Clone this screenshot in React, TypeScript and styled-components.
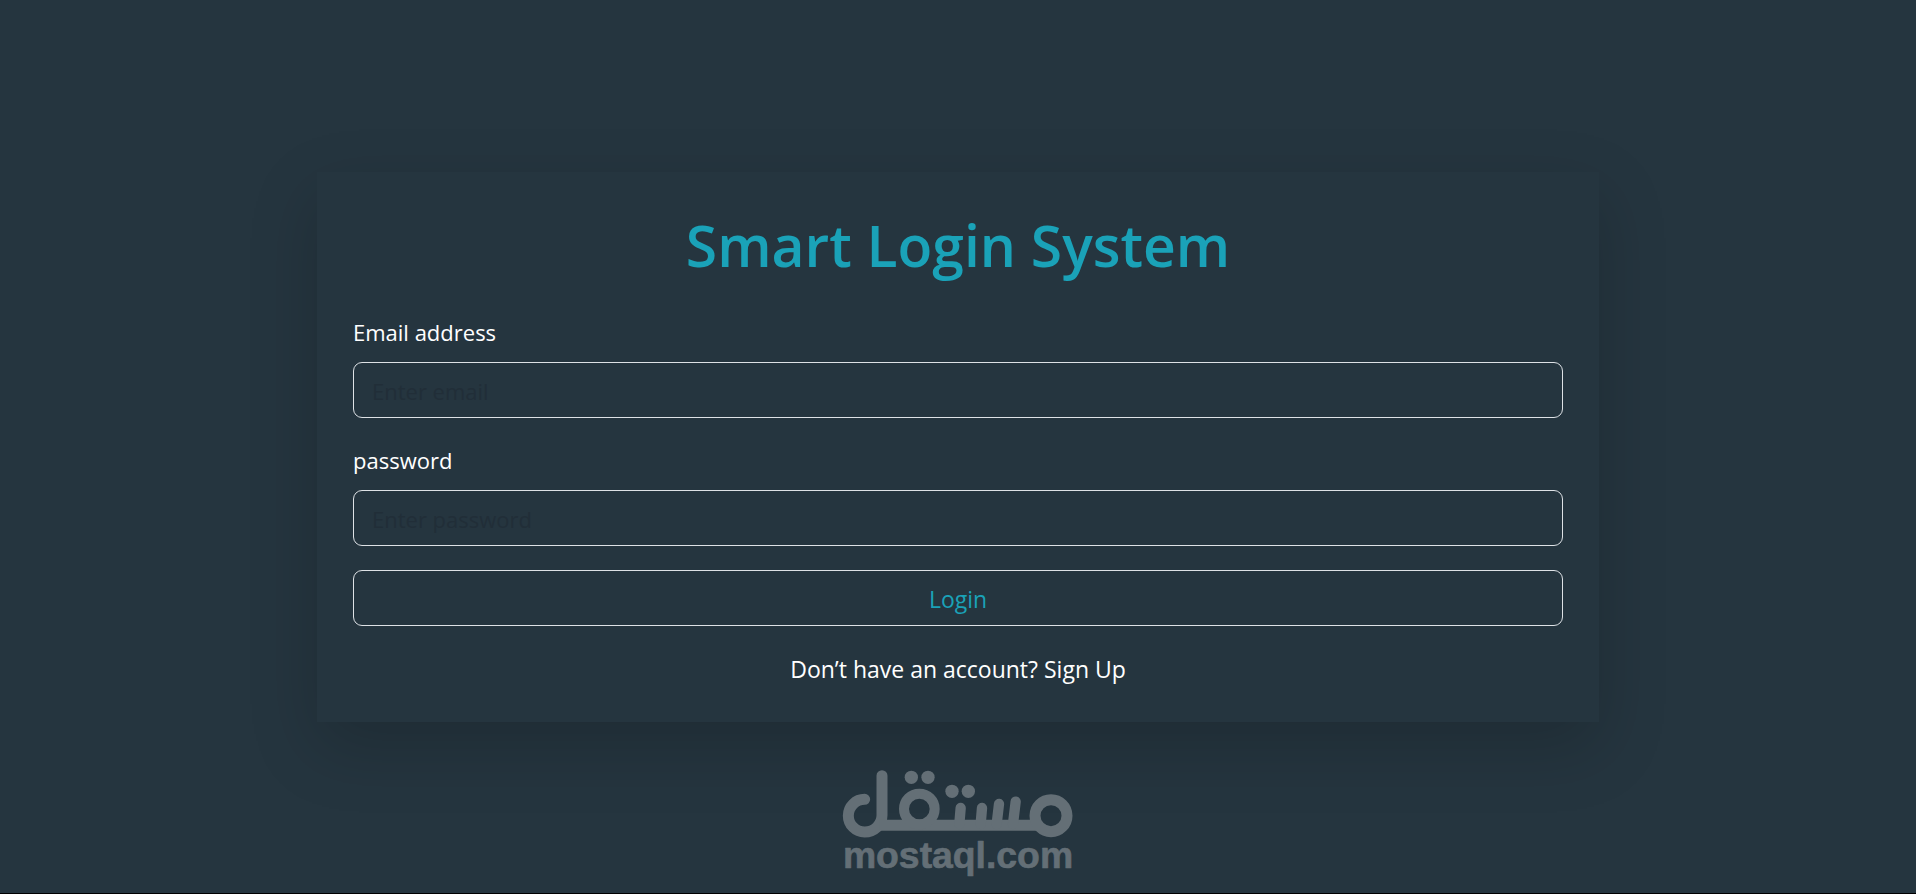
import React, { useState } from "react";
import styled, { createGlobalStyle } from "styled-components";

const GlobalStyle = createGlobalStyle`
  *, *::before, *::after { box-sizing: border-box; }
  body {
    margin: 0;
    background: #25353f;
    color: #ffffff;
    font-family: "Segoe UI", "Open Sans", "Noto Sans", sans-serif;
    font-size: 23px;
    line-height: 36px;
  }
`;

const Page = styled.div`
  display: grid;
  grid-template-rows: 1fr auto 1fr;
  justify-items: center;
  min-height: 100vh;
`;

const Card = styled.main`
  grid-row: 2;
  width: 100%;
  max-width: 1282px;
  padding: 36px;
  background: #25353f;
  box-shadow: 0 24px 64px rgba(0, 0, 0, 0.175);
`;

const Title = styled.h1`
  margin: 0 0 34px;
  padding-top: 2px;
  color: #1aa2b8;
  font-size: 57px;
  font-weight: 600;
  line-height: 70px;
  text-align: center;
`;

const Form = styled.form`
  display: flex;
  flex-direction: column;
  gap: 24px;
`;

const Field = styled.div`
  display: flex;
  flex-direction: column;
  gap: 12px;
`;

const Label = styled.label`
  font-size: 22px;
`;

const Input = styled.input`
  width: 100%;
  height: 56px;
  padding: 2px 18px 0;
  border: 1px solid #dee2e6;
  border-radius: 9px;
  background: transparent;
  color: #ffffff;
  font: inherit;
  font-size: 22px;

  &::placeholder {
    color: #212e38;
    opacity: 1;
  }
`;

const Button = styled.button`
  height: 56px;
  padding: 2px 18px 0;
  border: 1px solid #dee2e6;
  border-radius: 9px;
  background: transparent;
  color: #1aa2b8;
  font: inherit;
  cursor: pointer;
`;

const Prompt = styled.p`
  margin: 0;
  padding-top: 2px;
  line-height: 34px;
  text-align: center;
`;

const Link = styled.a`
  color: inherit;
  text-decoration: none;
`;

const Footer = styled.footer`
  grid-row: 3;
  display: flex;
  align-items: flex-end;
  justify-content: center;
  width: 100%;
  padding-bottom: 12px;
  border-bottom: 1px solid #000000;
`;

const Logo = styled.svg`
  display: block;
  color: #646f76;
`;

function MostaqlLogo() {
  return (
    <Logo width="232" height="112" viewBox="66 57 696 336" role="img" aria-label="mostaql.com">
      <g fill="none" stroke="currentColor" strokeWidth="33" strokeLinecap="round">
        <path d="M134 148A49 49 0 1 0 134 246C162 246 186 224 186 196V77" />
        <path d="M178 226H660" strokeLinecap="butt" />
        <circle cx="298" cy="177" r="46" strokeWidth="30" />
        <path d="M422 174L418 222M486 174L482 222M537 162L530 222M587 155L579 222" strokeWidth="31" />
        <circle cx="693" cy="197" r="48" />
      </g>
      <g fill="currentColor">
        <circle cx="274" cy="82" r="20" />
        <circle cx="324" cy="82" r="20" />
        <circle cx="396" cy="124" r="20" />
        <circle cx="445" cy="124" r="20" />
        <text
          x="414"
          y="353"
          textAnchor="middle"
          fontFamily="'Liberation Sans', Arial, sans-serif"
          fontSize="112"
          fontWeight="700"
          stroke="currentColor"
          strokeWidth="2"
          strokeLinejoin="round"
        >
          mostaql.com
        </text>
      </g>
    </Logo>
  );
}

export default function App() {
  const [email, setEmail] = useState("");
  const [password, setPassword] = useState("");

  return (
    <>
      <GlobalStyle />
      <Page>
        <Card>
          <Title>Smart Login System</Title>
          <Form onSubmit={(e: React.FormEvent) => e.preventDefault()}>
            <Field>
              <Label htmlFor="email">Email address</Label>
              <Input
                id="email"
                type="email"
                placeholder="Enter email"
                value={email}
                onChange={(e) => setEmail(e.target.value)}
              />
            </Field>
            <Field>
              <Label htmlFor="password">password</Label>
              <Input
                id="password"
                type="password"
                placeholder="Enter password"
                value={password}
                onChange={(e) => setPassword(e.target.value)}
              />
            </Field>
            <Button type="submit">Login</Button>
            <Prompt>
              Don’t have an account? <Link href="#signup">Sign Up</Link>
            </Prompt>
          </Form>
        </Card>
        <Footer>
          <MostaqlLogo />
        </Footer>
      </Page>
    </>
  );
}
